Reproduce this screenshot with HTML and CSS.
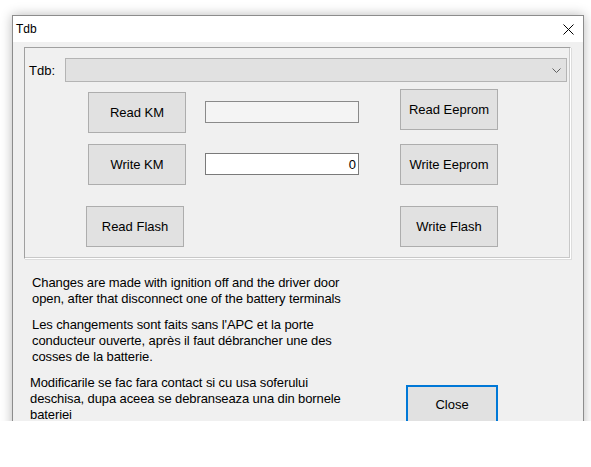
FILE: index.html
```html
<!DOCTYPE html>
<html>
<head>
<meta charset="utf-8">
<link rel="stylesheet" href="styles.css">
</head>
<body>
<div class="stage">
  <div class="window">
    <div class="titlebar">
      <span class="title">Tdb</span>
      <svg class="x" width="11" height="11" viewBox="0 0 11 11"><path d="M0.5 0.5 L10.5 10.5 M10.5 0.5 L0.5 10.5" stroke="#000" stroke-width="1" fill="none"/></svg>
    </div>
    <div class="group">
      <div class="combo-row">
        <span class="label">Tdb:</span>
        <div class="combo">
          <svg class="chev" width="9" height="5" viewBox="0 0 9 5"><path d="M0.5 0.5 L4.5 4.5 L8.5 0.5" stroke="#606060" fill="none" stroke-width="1"/></svg>
        </div>
      </div>
      <div class="controls">
        <div class="btn">Read KM</div>
        <div class="field disabled"></div>
        <div class="btn up">Read Eeprom</div>
        <div class="btn">Write KM</div>
        <div class="field">0</div>
        <div class="btn">Write Eeprom</div>
        <div class="btn r3 shift">Read Flash</div>
        <div class="spacer r3"></div>
        <div class="btn r3">Write Flash</div>
      </div>
    </div>
    <div class="footer">
      <p>Changes are made with ignition off and the driver door<br>open, after that disconnect one of the battery terminals</p>
      <p>Les changements sont faits sans l'APC et la porte<br>conducteur ouverte, après il faut débrancher une des<br>cosses de la batterie.</p>
      <div class="last-row">
        <p class="ro">Modificarile se fac fara contact si cu usa soferului<br>deschisa, dupa aceea se debranseaza una din bornele<br>bateriei</p>
        <div class="close">Close</div>
      </div>
    </div>
  </div>
</div>
</body>
</html>
```
FILE: styles.css
```css
html, body {
  margin: 0;
  padding: 0;
  background: #ffffff;
  overflow: hidden;
}
body {
  font-family: "Liberation Sans", Arial, sans-serif;
  font-size: 12px;
  color: #000;
}
.stage {
  box-sizing: border-box;
  height: 421px;
  overflow: hidden;
  padding: 15px 0 0 12px;
}
.window {
  box-sizing: border-box;
  width: 572px;
  height: 420px;
  border: 1px solid #8c8c8c;
  border-bottom: none;
  background: #f0f0f0;
  box-shadow: 0 0 11px rgba(0, 0, 0, 0.28);
}
.titlebar {
  height: 26px;
  background: #ffffff;
  display: flex;
  align-items: center;
  justify-content: space-between;
  padding: 0 9px 0 3px;
}
.title {
  font-size: 12px;
}
.x {
  display: block;
}
.group {
  margin: 5px 12px 0 11px;
  border-top: 1px solid #a0a0a0;
  border-left: 1px solid #a0a0a0;
  border-right: 1px solid #ffffff;
  border-bottom: 1px solid #ffffff;
  box-shadow: inset -1px -1px 0 #c8c8c8, 1px 1px 0 #dcdcdc;
  padding-bottom: 11px;
}
.combo-row {
  display: flex;
  align-items: center;
  margin-top: 10px;
  padding-left: 4px;
}
.label {
  width: 36px;
  font-size: 13px;
}
.combo {
  box-sizing: border-box;
  width: 502px;
  height: 24px;
  border: 1px solid #b4b4b4;
  background: #e1e1e1;
  display: flex;
  align-items: center;
  justify-content: flex-end;
  padding-right: 5px;
}
.chev {
  display: block;
}
.controls {
  display: grid;
  grid-template-columns: 117px 195px 98px;
  row-gap: 11px;
  margin-top: 10px;
  padding-left: 63px;
  align-items: start;
}
.btn {
  box-sizing: border-box;
  width: 98px;
  height: 41px;
  border: 1px solid #adadad;
  background: #e1e1e1;
  display: flex;
  align-items: center;
  justify-content: center;
  font-size: 13px;
}
.up {
  margin-top: -3px;
}
.r3 {
  margin-top: 10px;
}
.shift {
  margin-left: -2px;
}
.field {
  box-sizing: border-box;
  width: 154px;
  height: 22px;
  margin-top: 9px;
  border: 1px solid #7a7a7a;
  background: #ffffff;
  text-align: right;
  padding: 3px 2px 0 0;
  font-size: 13px;
  line-height: 16px;
}
.field.disabled {
  background: #f4f4f4;
  border-color: #8a8a8a;
}
.footer {
  margin-top: 16px;
  padding-left: 19px;
  font-size: 13px;
  line-height: 16px;
  letter-spacing: -0.1px;
}
.footer p {
  margin: 0 0 10px 0;
  white-space: nowrap;
}
.last-row {
  display: flex;
  align-items: flex-start;
  margin-top: 1px;
}
.footer .ro {
  margin: 0 0 0 -2px;
  width: 376px;
}
.close {
  box-sizing: border-box;
  width: 92px;
  height: 40px;
  margin-top: 10px;
  border: 2px solid #0078d7;
  background: #e1e1e1;
  display: flex;
  align-items: center;
  justify-content: center;
  font-size: 13px;
  letter-spacing: 0;
}
```
